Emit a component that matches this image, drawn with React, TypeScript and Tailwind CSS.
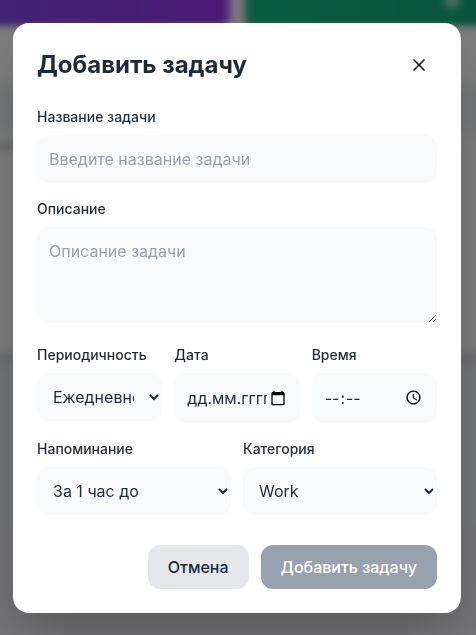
import { useState } from 'react';
import { X } from 'lucide-react';

const labelClass = 'block text-sm font-medium text-gray-800 mb-2';
const fieldClass = 'w-full bg-gray-50 rounded-xl p-3 text-gray-800 focus:outline-none focus:ring-2 focus:ring-purple-500';

const Dashboard = () => (
  <div className="min-h-screen flex flex-col bg-gray-100 overflow-hidden">
    <div className="flex gap-4 blur-xs -mx-4 -mt-4">
      <div className="w-1/2 h-11 rounded-b-lg bg-linear-to-r from-[#8046e8] to-[#9832e8]" />
      <div className="w-1/2 h-11 rounded-b-lg bg-linear-to-r from-[#0fb981] to-[#12a878] flex justify-end pr-8">
        <span className="size-4 mt-2 rounded-full bg-white/60" />
      </div>
    </div>
    <div className="flex-1 flex flex-col blur-xs -mx-4">
      <div className="h-14 bg-[#f8f8f8]" />
      <div className="h-12 bg-[#e6ebf0]" />
      <div className="h-3 bg-[#f4f4f4]" />
      <div className="h-1 bg-[#f4f4f4]">
        <div className="w-1/2 h-1 bg-[#a8a8a8]" />
      </div>
      <div className="h-51 bg-[#f6f6f6]" />
      <div className="h-3 bg-[#d6d6de]" />
      <div className="h-40 bg-[#e1e7eb]" />
      <div className="flex-1 bg-[#e4e4ea]" />
    </div>
  </div>
);

const App = () => {
  const [formData, setFormData] = useState({
    title: '',
    description: '',
    frequency: 'daily',
    date: '',
    time: '',
    reminder: '1h',
    category: 'work'
  });

  const handleChange = (e: React.ChangeEvent<HTMLInputElement | HTMLSelectElement | HTMLTextAreaElement>) => {
    setFormData({
      ...formData,
      [e.target.name]: e.target.value
    });
  };

  const handleSubmit = (e: React.FormEvent) => {
    e.preventDefault();
  };

  return (
    <div className="font-['Inter','Noto_Sans',sans-serif]">
      <Dashboard />

      <div className="fixed inset-0 bg-black/50 flex items-center justify-center pr-0.5">
        <div role="dialog" aria-labelledby="dialog-title" className="w-full max-w-md bg-white rounded-2xl shadow-2xl p-6">
          <div className="flex items-center justify-between mb-6">
            <h2 id="dialog-title" className="text-2xl font-bold text-gray-800">Добавить задачу</h2>
            <button type="button" aria-label="Закрыть" className="p-2 rounded-lg text-gray-900 hover:bg-gray-100">
              <X size={20} />
            </button>
          </div>

          <form onSubmit={handleSubmit} className="space-y-4">
            <div>
              <label htmlFor="title" className={labelClass}>Название задачи</label>
              <input
                id="title"
                type="text"
                name="title"
                value={formData.title}
                onChange={handleChange}
                placeholder="Введите название задачи"
                className={`${fieldClass} placeholder:text-gray-400`}
              />
            </div>

            <div className="pb-1.5">
              <label htmlFor="description" className={labelClass}>Описание</label>
              <textarea
                id="description"
                name="description"
                rows={3}
                value={formData.description}
                onChange={handleChange}
                placeholder="Описание задачи"
                className={`${fieldClass} block placeholder:text-gray-400`}
              />
            </div>

            <div className="grid grid-cols-3 gap-3">
              <div>
                <label htmlFor="frequency" className={labelClass}>Периодичность</label>
                <select
                  id="frequency"
                  name="frequency"
                  value={formData.frequency}
                  onChange={handleChange}
                  className={`${fieldClass} h-12`}
                >
                  <option value="daily">Ежедневно</option>
                  <option value="weekly">Еженедельно</option>
                  <option value="monthly">Ежемесячно</option>
                </select>
              </div>

              <div>
                <label htmlFor="date" className={labelClass}>Дата</label>
                <div className="flex items-center bg-gray-50 rounded-xl p-3">
                  <input
                    id="date"
                    type="text"
                    inputMode="numeric"
                    name="date"
                    value={formData.date}
                    onChange={handleChange}
                    placeholder="дд.мм.гггг"
                    className="min-w-0 flex-1 p-px text-gray-800 placeholder:text-gray-800 focus:outline-none"
                  />
                  <button type="button" aria-label="Выбрать дату" className="pl-0.5 pr-0.5 text-black">
                    <svg width="16" height="16" viewBox="0 0 24 24" fill="currentColor">
                      <path d="M20 3h-1V1h-2v2H7V1H5v2H4c-1.1 0-2 .9-2 2v16c0 1.100.9 2 2 2h16c1.100 0 2-.9 2-2V5c0-1.100-.9-2-2-2zm0 18H4V8h16v13z" />
                    </svg>
                  </button>
                </div>
              </div>

              <div>
                <label htmlFor="time" className={labelClass}>Время</label>
                <input
                  id="time"
                  type="time"
                  name="time"
                  value={formData.time}
                  onChange={handleChange}
                  className={`${fieldClass} block h-[50px] [&::-webkit-datetime-edit-ampm-field]:hidden`}
                />
              </div>
            </div>

            <div className="grid grid-cols-2 gap-3">
              <div>
                <label htmlFor="reminder" className={labelClass}>Напоминание</label>
                <select
                  id="reminder"
                  name="reminder"
                  value={formData.reminder}
                  onChange={handleChange}
                  className={`${fieldClass} h-12`}
                >
                  <option value="15m">За 15 минут до</option>
                  <option value="1h">За 1 час до</option>
                  <option value="1d">За 1 день до</option>
                </select>
              </div>

              <div>
                <label htmlFor="category" className={labelClass}>Категория</label>
                <select
                  id="category"
                  name="category"
                  value={formData.category}
                  onChange={handleChange}
                  className={`${fieldClass} h-12`}
                >
                  <option value="work">Work</option>
                  <option value="home">Home</option>
                </select>
              </div>
            </div>

            <div className="flex justify-end gap-3 pt-3.5">
              <button type="button" className="px-5 py-2.5 rounded-xl bg-gray-200 text-gray-800 font-medium hover:bg-gray-300">
                Отмена
              </button>
              <button
                type="submit"
                disabled={!formData.title}
                className="px-5 py-2.5 rounded-xl bg-purple-600 text-white font-medium disabled:bg-gray-400"
              >
                Добавить задачу
              </button>
            </div>
          </form>
        </div>
      </div>
    </div>
  );
};

export default App;
